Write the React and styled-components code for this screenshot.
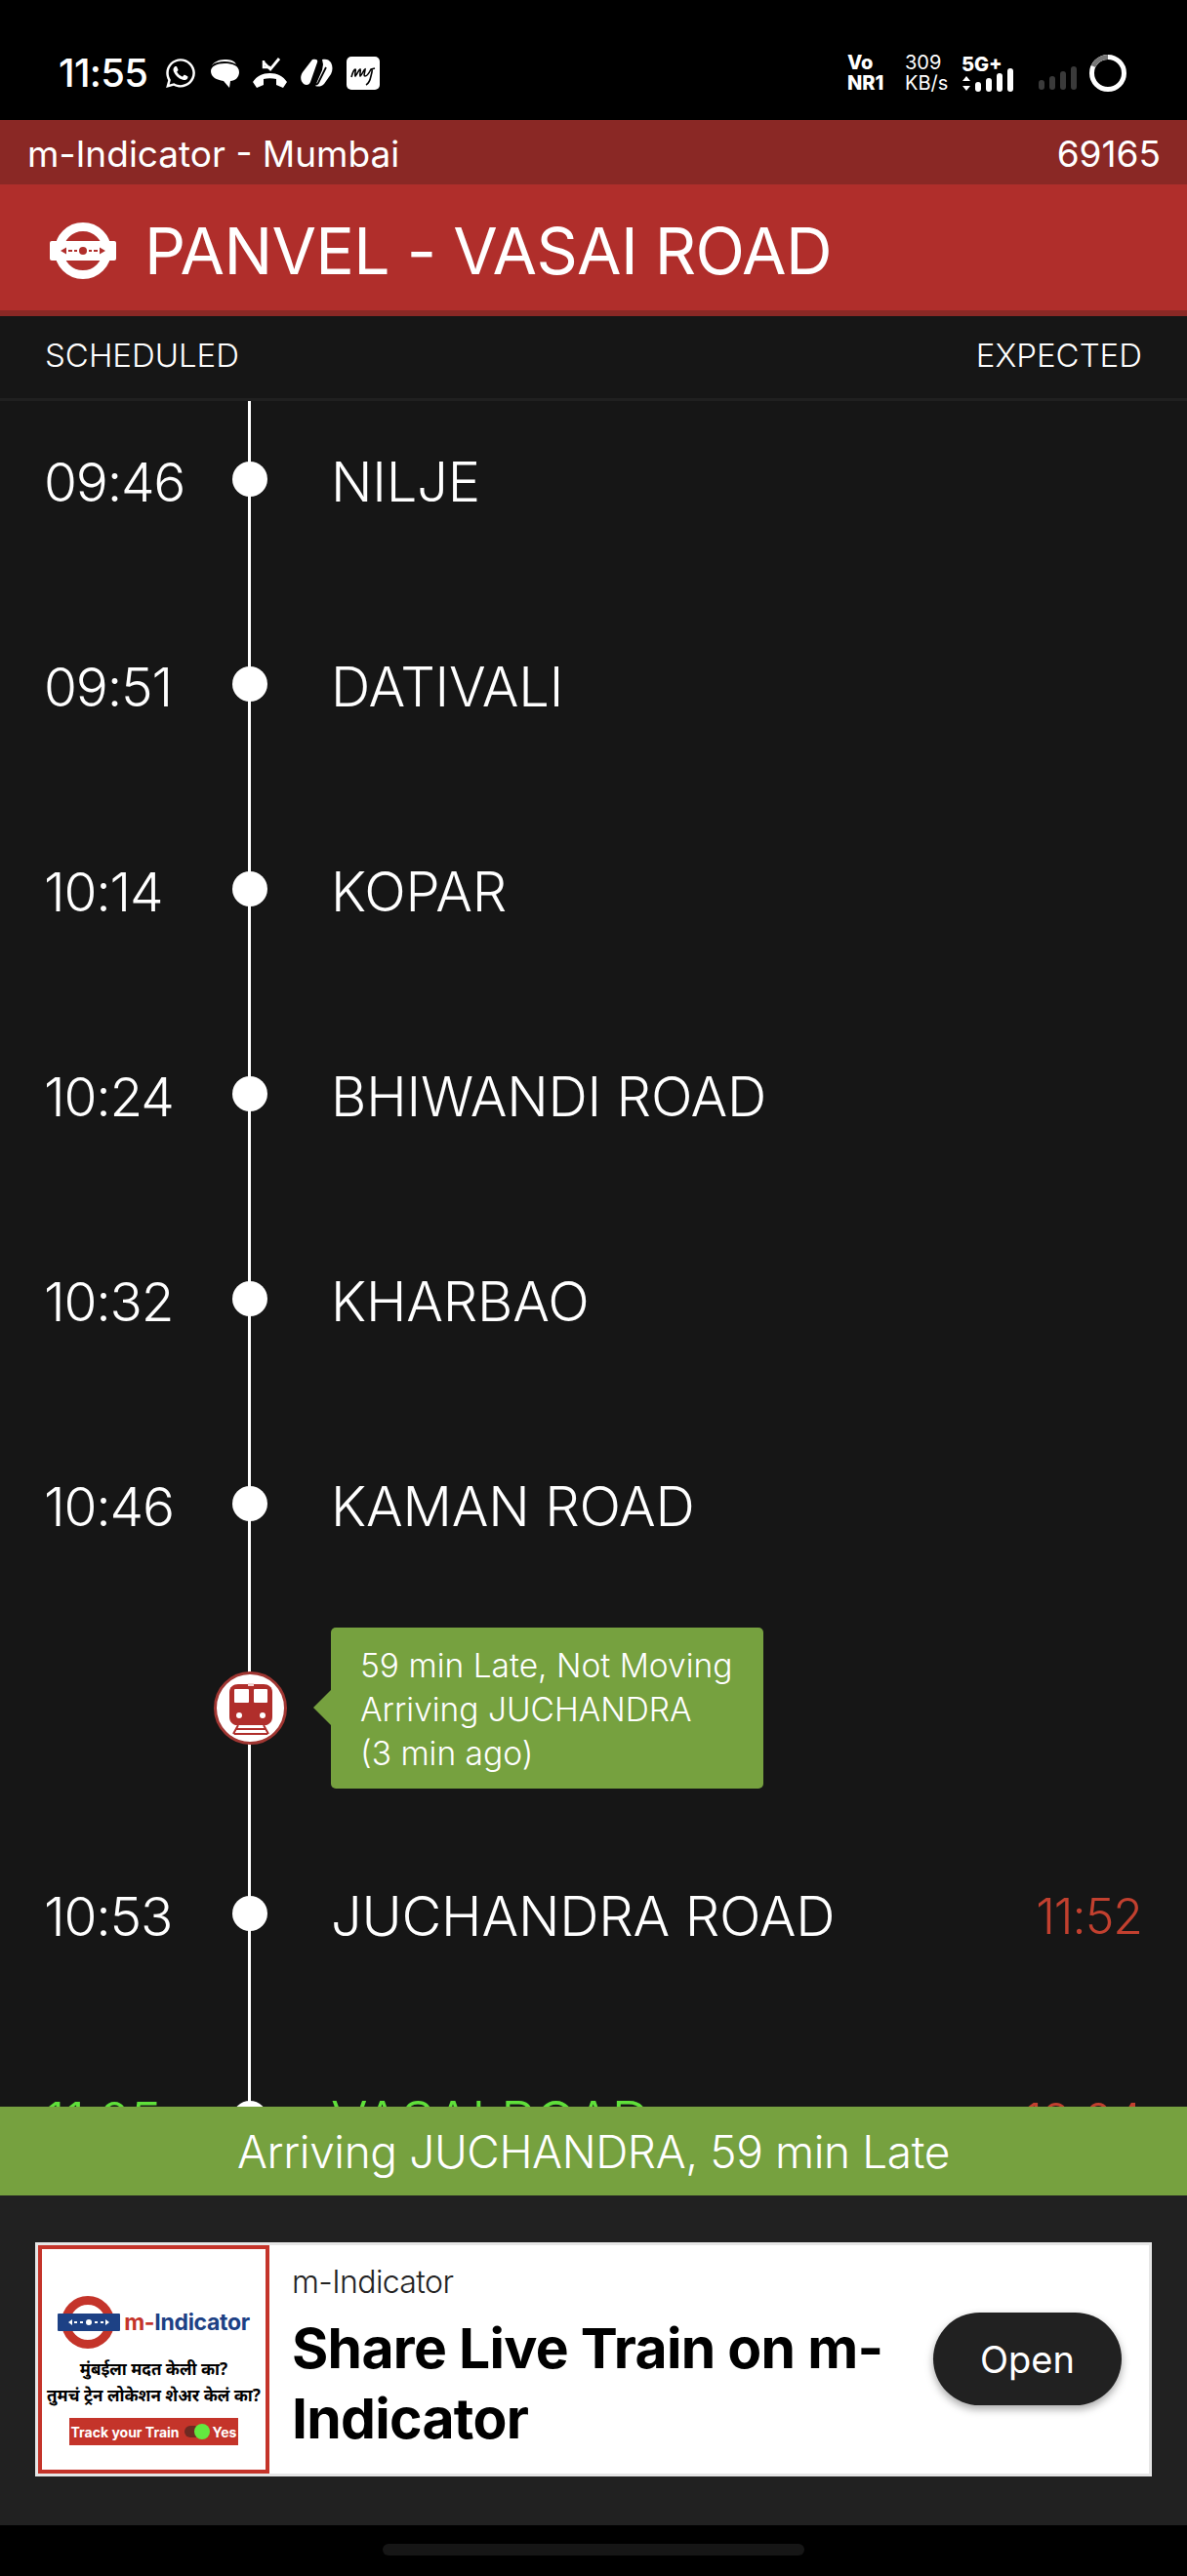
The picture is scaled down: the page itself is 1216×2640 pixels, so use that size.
import React from 'react';
import styled, { createGlobalStyle } from 'styled-components';
import { FaWhatsapp } from 'react-icons/fa';

const GlobalStyle = createGlobalStyle`
  html, body { margin: 0; padding: 0; background: #000; }
  * { box-sizing: border-box; }
`;

const FONT = `Inter, "Noto Sans", sans-serif`;

const Screen = styled.div`
  width: 1216px;
  height: 2640px;
  display: flex;
  flex-direction: column;
  overflow: hidden;
  background: #161616;
  color: #fff;
  font-family: ${FONT};
`;

const StatusBar = styled.div`
  height: 123px;
  flex: none;
  background: #000;
  display: flex;
  align-items: center;
  justify-content: space-between;
  padding: 27px 62px 0 60px;
`;

const StatusLeft = styled.div`
  display: flex;
  align-items: center;
  gap: 14px;
`;

const Clock = styled.span`
  font-size: 40px;
  font-weight: 500;
  letter-spacing: -0.7px;
  line-height: 40px;
  margin-right: 3px;
`;

const StatusRight = styled.div`
  display: flex;
  align-items: center;
`;

const StackedLabel = styled.div`
  display: flex;
  flex-direction: column;
  line-height: 21px;
  font-size: ${p => p.$size || 19}px;
  font-weight: ${p => p.$weight || 400};
  width: ${p => p.$width}px;
`;

const NetBlock = styled.div`
  display: flex;
  flex-direction: column;
  width: 79px;
  margin-top: -2px;

  svg {
    margin-top: -7px;
  }
`;

const NetLabel = styled.span`
  font-size: 20px;
  font-weight: 800;
  line-height: 22px;
`;

const BarsSlot = styled.div`
  padding: 14px 12px 0 0;
`;

const AppBar = styled.div`
  height: 66px;
  flex: none;
  background: #8a2825;
  display: flex;
  align-items: center;
  justify-content: space-between;
  padding: 2px 27px 0 28px;
  font-size: 37px;
  font-weight: 400;
`;

const TitleBar = styled.div`
  height: 135px;
  flex: none;
  background: #b02e2b;
  border-bottom: 6px solid #8a2825;
  display: flex;
  align-items: center;
  gap: 29px;
  padding: 7px 0 0 51px;
`;

const Title = styled.h1`
  margin: 0;
  font-size: 66px;
  font-weight: 400;
  line-height: 80px;
  letter-spacing: -0.7px;
`;

const ColumnHeader = styled.div`
  height: 87px;
  flex: none;
  background: #161616;
  border-bottom: 3px solid #202020;
  display: flex;
  align-items: center;
  justify-content: space-between;
  padding: 0 46px 4px;
  font-size: 33px;
  font-weight: 300;
  position: relative;
  z-index: 1;
`;

const ListViewport = styled.div`
  flex: 1;
  min-height: 0;
  overflow: hidden;
`;

const List = styled.div`
  margin-top: -25px;
`;

const Row = styled.div`
  display: grid;
  grid-template-columns: 210px 84px 1fr auto;
  height: 210px;
  padding: ${p => (p.$train ? '0 46px 2px' : '0 46px')};
  align-items: center;
  color: ${p => (p.$current ? '#5fe03a' : '#fff')};
`;

const Time = styled.span`
  font-size: 55px;
  font-weight: 300;
  letter-spacing: -1.2px;
  margin-left: -1px;
  padding-top: 6px;
`;

const Rail = styled.div`
  position: relative;
  height: 100%;
  display: flex;
  align-items: center;

  &::before {
    content: '';
    position: absolute;
    left: -2px;
    top: 0;
    bottom: ${p => (p.$extend ? '-2px' : '0')};
    width: 3px;
    background: #fff;
  }
`;

const Dot = styled.span`
  position: relative;
  width: 36px;
  height: 36px;
  margin-left: -18px;
  border-radius: 50%;
  background: #fff;
`;

const TrainBadge = styled.span`
  position: relative;
  width: 75px;
  height: 75px;
  margin-left: -37px;
  border-radius: 50%;
  background: #fff;
  border: 3px solid #a03632;
  display: flex;
  align-items: center;
  justify-content: center;
  padding-top: 2px;
`;

const StationName = styled.span`
  font-size: 56px;
  font-weight: 300;
  letter-spacing: -0.2px;
  margin-left: -1px;
  padding-top: 6px;
  grid-column: 3;
`;

const Expected = styled.span`
  font-size: 50px;
  font-weight: 300;
  color: #c2402f;
  letter-spacing: -1px;
  padding-top: 6px;
`;

const Bubble = styled.div`
  position: relative;
  grid-column: 3;
  justify-self: start;
  width: 443px;
  height: 165px;
  margin-left: -1px;
  padding: 17px 30px;
  background: #76a13f;
  border-radius: 5px;
  font-size: 33.500px;
  font-weight: 300;
  line-height: 45px;
  white-space: nowrap;

  &::before {
    content: '';
    position: absolute;
    left: -18px;
    top: 64px;
    border-style: solid;
    border-width: 18px 18px 18px 0;
    border-color: transparent #76a13f transparent transparent;
  }
`;

const StatusStrip = styled.div`
  height: 91px;
  flex: none;
  background: #76a13f;
  display: flex;
  align-items: center;
  justify-content: center;
  font-size: 46px;
  font-weight: 300;
  letter-spacing: -0.4px;
  position: relative;
`;

const AdBand = styled.div`
  height: 338px;
  flex: none;
  background: #212121;
  padding: 48px 36px;
`;

const AdCard = styled.div`
  height: 240px;
  width: 1144px;
  background: #fff;
  border: 3px solid #e6e6e6;
  display: flex;
  color: #000;
`;

const AdImage = styled.div`
  width: 237px;
  height: 100%;
  flex: none;
  border: 4px solid #c4342a;
  display: flex;
  flex-direction: column;
  align-items: center;
  padding-top: 48px;
  background: #fff;
`;

const AdLogoRow = styled.div`
  display: flex;
  align-items: center;
  gap: 4px;
`;

const AdBrand = styled.span`
  font-size: 23px;
  font-weight: 700;
  color: #1d4185;
  letter-spacing: -0.3px;
`;

const AdBrandM = styled.span`
  color: #c4342a;
`;

const AdHindi = styled.div`
  font-size: 17px;
  font-weight: 700;
  line-height: 27px;
  text-align: center;
  white-space: nowrap;
  margin-top: 7px;
  font-family: "Noto Sans", "Noto Sans Devanagari", "Lohit Devanagari", sans-serif;
`;

const AdCta = styled.div`
  width: 173px;
  height: 28px;
  margin-top: 10px;
  background: #c4342a;
  color: #fff;
  font-size: 14px;
  font-weight: 700;
  display: flex;
  align-items: center;
  justify-content: center;
  gap: 5px;
`;

const Toggle = styled.span`
  width: 24px;
  height: 12px;
  border-radius: 6px;
  background: #6e2a22;
  position: relative;

  &::after {
    content: '';
    position: absolute;
    right: -2px;
    top: -2px;
    width: 16px;
    height: 16px;
    border-radius: 50%;
    background: #63e83f;
  }
`;

const AdBody = styled.div`
  flex: 1;
  padding: 21px 0 0 24px;
  min-width: 0;
`;

const AdSource = styled.div`
  font-size: 32px;
  font-weight: 300;
  line-height: 34px;
  color: #222;
  letter-spacing: -0.6px;
  margin-left: -1px;
`;

const AdHeadline = styled.div`
  width: 640px;
  margin-top: 15px;
  font-size: 57px;
  font-weight: 700;
  line-height: 72px;
  letter-spacing: -0.7px;
  margin-left: -1px;
`;

const AdAction = styled.div`
  flex: none;
  padding: 69px 28px 0 0;
`;

const OpenButton = styled.button`
  width: 193px;
  height: 95px;
  border: 0;
  border-radius: 48px;
  background: #212121;
  color: #fff;
  font-family: ${FONT};
  font-size: 38px;
  font-weight: 400;
  box-shadow: 0 4px 8px rgba(0, 0, 0, 0.35);
`;

const NavBar = styled.div`
  height: 52px;
  flex: none;
  background: #000;
  display: flex;
  justify-content: center;
  padding-top: 19px;
`;

const NavHandle = styled.div`
  width: 432px;
  height: 12px;
  border-radius: 6px;
  background: #161616;
`;

const TrainIcon = () => (
  <svg width="44" height="53" viewBox="0 0 44 53">
    <path d="M9 1h26c5 0 9 3 9 8v25c0 4-1 7-6 9H6c-5-2-6-5-6-9V9c0-5 4-8 9-8z" fill="#b02e2b" />
    <rect x="19" y="0" width="6" height="3" fill="#f3d5d3" />
    <rect x="5" y="6" width="15" height="14" rx="1" fill="#fff" />
    <rect x="25" y="6" width="14" height="14" rx="1" fill="#fff" />
    <circle cx="10" cy="33" r="3" fill="#fff" />
    <circle cx="34" cy="33" r="3" fill="#fff" />
    <path d="M9 43 4 52M35 43l5 9M7 47h30M5 52h34" fill="none" stroke="#b02e2b" strokeWidth="2" />
  </svg>
);

const RoundelLogo = () => (
  <svg width="68" height="58" viewBox="0 0 68 58">
    <circle cx="34" cy="29" r="24.500" fill="none" stroke="#fff" strokeWidth="9" />
    <rect x="0" y="19" width="68" height="20" rx="2" fill="#fff" />
    <g fill="#b02e2b">
      <circle cx="34" cy="29" r="4" />
      <path d="M11 29l6-3.500v7zM57 29l-6-3.500v7z" />
      <rect x="19" y="28" width="4" height="2" />
      <rect x="25" y="28" width="3" height="2" />
      <rect x="40" y="28" width="3" height="2" />
      <rect x="45" y="28" width="4" height="2" />
    </g>
  </svg>
);

const AdRoundel = () => (
  <svg width="64" height="54" viewBox="0 0 64 54">
    <circle cx="31" cy="27" r="22.500" fill="none" stroke="#c4342a" strokeWidth="9" />
    <rect x="0" y="18" width="64" height="18" rx="1" fill="#1d4185" />
    <g fill="#fff">
      <circle cx="32" cy="27" r="3" />
      <path d="M11 27l4-3v6zM53 27l-4-3v6z" />
      <rect x="17" y="26" width="3" height="2" />
      <rect x="23" y="26" width="3" height="2" />
      <rect x="38" y="26" width="3" height="2" />
      <rect x="44" y="26" width="3" height="2" />
    </g>
  </svg>
);

// two overlapping speech bubbles, as drawn in the status bar
const ChatIcon = () => (
  <svg width="29" height="32" viewBox="0 0 29 32">
    <path d="M1 8c2-3 7-6 13-6 6 0 10 1 12 5-3-2-7-3-12-3C9 4 4 5 1 8z" fill="#fff" />
    <path d="M14 6c8 0 15 2 15 9 0 5-4 9-9 9l-1 7-6-7C6 23 0 20 0 14c0-5 6-8 14-8z" fill="#fff" />
  </svg>
);

const MissedCallIcon = () => (
  <svg width="35" height="32" viewBox="0 0 35 32">
    <path d="M0 25c4-6 10-9 17.500-9S31 19 35 25l-4 6-7-3v-6c-4-1-9-1-13 0v6l-7 3z" fill="#fff" />
    <path d="M11 5l7 7 9-11" fill="none" stroke="#fff" strokeWidth="2.800" />
    <path d="M11 3v7h7" fill="none" stroke="#fff" strokeWidth="2.500" />
  </svg>
);

const ClipIcon = () => (
  <svg width="33" height="32" viewBox="0 0 33 32">
    <path d="M12 2c4-1 6 0 5 3L10 25c-1 3-4 4-7 2-3-3-4-7-1-12z" fill="#fff" />
    <path d="M22 2c4-1 7 0 9 3 2 4 2 8 0 12l-7 10c-3 3-6 3-9 2l7-16 1-6z" fill="#fff" />
    <path d="M21 5 13 24c-1 3 3 5 5 2l8-16" fill="none" stroke="#000" strokeWidth="1.800" />
  </svg>
);

const MyIcon = () => (
  <svg width="34" height="34" viewBox="0 0 34 34">
    <rect width="34" height="34" rx="5" fill="#fff" />
    <path d="M5 21c1-4 3-8 4-8s-1 6 0 7c2-2 3-6 5-7 1 2-1 6 0 7 2-1 3-6 5-7 0 3-2 7 0 7 2 0 5-5 6-7 2 0 1 3 0 7-1 5-3 8-5 9M25 13l4-1" fill="none" stroke="#000" strokeWidth="1.600" />
  </svg>
);

const SignalBars = ({ color }) => (
  <svg width="40" height="24" viewBox="0 0 40 24" fill={color}>
    <rect x="0" y="14" width="6" height="10" rx="3" />
    <rect x="11" y="10" width="6" height="14" rx="3" />
    <rect x="22" y="5" width="6" height="19" rx="3" />
    <rect x="33" y="0" width="6" height="24" rx="3" />
  </svg>
);

const NetBars = () => (
  <svg width="53" height="24" viewBox="0 0 53 24">
    <path d="M5 8l4 5H1zM5 23l4-5H1z" fill="#fff" />
    <g transform="translate(14 0)" fill="#fff">
      <rect x="0" y="14" width="6" height="10" rx="3" />
      <rect x="11" y="10" width="6" height="14" rx="3" />
      <rect x="22" y="5" width="6" height="19" rx="3" />
      <rect x="33" y="0" width="6" height="24" rx="3" />
    </g>
  </svg>
);

const BatteryRing = () => (
  <svg width="38" height="38" viewBox="0 0 38 38">
    <circle cx="19" cy="19" r="16.500" fill="none" stroke="#fff" strokeWidth="5" />
    <path d="M4 12A16.500 16.500 0 0 1 19 2.500" fill="none" stroke="#777" strokeWidth="5" />
  </svg>
);

const stations = [
  ['09:46', 'NILJE'],
  ['09:51', 'DATIVALI'],
  ['10:14', 'KOPAR'],
  ['10:24', 'BHIWANDI ROAD'],
  ['10:32', 'KHARBAO'],
  ['10:46', 'KAMAN ROAD'],
];

export default function App() {
  return (
    <Screen>
      <GlobalStyle />
      <StatusBar>
        <StatusLeft>
          <Clock>11:55</Clock>
          <FaWhatsapp size={34} />
          <ChatIcon />
          <MissedCallIcon />
          <ClipIcon />
          <MyIcon />
        </StatusLeft>
        <StatusRight>
          <StackedLabel $width={59} $size={20} $weight={800}>
            <span>Vo</span>
            <span>NR1</span>
          </StackedLabel>
          <StackedLabel $width={58} $size={20}>
            <span>309</span>
            <span>KB/s</span>
          </StackedLabel>
          <NetBlock>
            <NetLabel>5G+</NetLabel>
            <NetBars />
          </NetBlock>
          <BarsSlot><SignalBars color="#3a3a3a" /></BarsSlot>
          <BatteryRing />
        </StatusRight>
      </StatusBar>

      <AppBar>
        <span>m-Indicator - Mumbai</span>
        <span>69165</span>
      </AppBar>

      <TitleBar>
        <RoundelLogo />
        <Title>PANVEL - VASAI ROAD</Title>
      </TitleBar>

      <ColumnHeader>
        <span>SCHEDULED</span>
        <span>EXPECTED</span>
      </ColumnHeader>

      <ListViewport>
        <List>
          {stations.map(([time, name]) => (
            <Row key={name}>
              <Time>{time}</Time>
              <Rail><Dot /></Rail>
              <StationName>{name}</StationName>
            </Row>
          ))}
          <Row $train>
            <span />
            <Rail $extend><TrainBadge><TrainIcon /></TrainBadge></Rail>
            <Bubble>
              59 min Late, Not Moving<br />
              Arriving JUCHANDRA<br />
              (3 min ago)
            </Bubble>
          </Row>
          <Row>
            <Time>10:53</Time>
            <Rail><Dot /></Rail>
            <StationName>JUCHANDRA ROAD</StationName>
            <Expected>11:52</Expected>
          </Row>
          <Row $current>
            <Time>11:05</Time>
            <Rail><Dot /></Rail>
            <StationName>VASAI ROAD</StationName>
            <Expected>12:04</Expected>
          </Row>
        </List>
      </ListViewport>

      <StatusStrip>Arriving JUCHANDRA, 59 min Late</StatusStrip>

      <AdBand>
        <AdCard>
          <AdImage>
            <AdLogoRow>
              <AdRoundel />
              <AdBrand><AdBrandM>m-</AdBrandM>Indicator</AdBrand>
            </AdLogoRow>
            <AdHindi>
              मुंबईला मदत केली का?<br />
              तुमचं ट्रेन लोकेशन शेअर केलं का?
            </AdHindi>
            <AdCta>
              <span>Track your Train</span>
              <Toggle />
              <span>Yes</span>
            </AdCta>
          </AdImage>
          <AdBody>
            <AdSource>m-Indicator</AdSource>
            <AdHeadline>Share Live Train on m-Indicator</AdHeadline>
          </AdBody>
          <AdAction>
            <OpenButton>Open</OpenButton>
          </AdAction>
        </AdCard>
      </AdBand>

      <NavBar><NavHandle /></NavBar>
    </Screen>
  );
}
